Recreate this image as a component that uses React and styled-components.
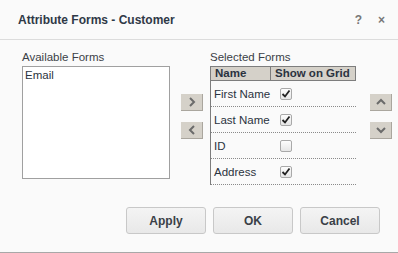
import React from "react";
import styled, { createGlobalStyle } from "styled-components";

const GlobalStyle = createGlobalStyle`
  html, body {
    margin: 0;
    padding: 0;
    background: #fafafa;
  }
  body {
    font-family: Tahoma, "DejaVu Sans", "Liberation Sans", sans-serif;
  }
`;

const selected = [
  { name: "First Name", grid: true },
  { name: "Last Name", grid: true },
  { name: "ID", grid: false },
  { name: "Address", grid: true },
];

const Chevron = ({ dir }) => {
  const paths = {
    right: "M3 1 L7 5 L3 9",
    left: "M7 1 L3 5 L7 9",
    up: "M1 7 L5 3 L9 7",
    down: "M1 3 L5 7 L9 3",
  };
  return (
    <svg width="10" height="10" viewBox="0 0 10 10">
      <path d={paths[dir]} fill="none" stroke="#6b6b6b" strokeWidth="2" />
    </svg>
  );
};

export default function App() {
  return (
    <>
      <GlobalStyle />
      <Dialog>
        <Header>
          <Title>Attribute Forms - Customer</Title>
          <HeaderTools>
            <ToolGlyph>?</ToolGlyph>
            <ToolGlyph>×</ToolGlyph>
          </HeaderTools>
        </Header>
        <Body>
          <Panel width={148}>
            <Label>Available Forms</Label>
            <ListBox>
              <ListItem>Email</ListItem>
            </ListBox>
          </Panel>
          <Shifters side="left">
            <ArrowButton><Chevron dir="right" /></ArrowButton>
            <ArrowButton><Chevron dir="left" /></ArrowButton>
          </Shifters>
          <Panel width={146}>
            <Label>Selected Forms</Label>
            <Grid>
              <HeadRow>
                <HeadCell width={60}>Name</HeadCell>
                <HeadCell last>Show on Grid</HeadCell>
              </HeadRow>
              {selected.map((row) => (
                <Row key={row.name}>
                  <NameCell>{row.name}</NameCell>
                  <CheckCell>
                    <Check>
                      {row.grid && (
                        <svg width="10" height="10" viewBox="0 0 10 10">
                          <path d="M1.5 5 L4 7.5 L8.5 1.5" fill="none" stroke="#222" strokeWidth="1.8" />
                        </svg>
                      )}
                    </Check>
                  </CheckCell>
                </Row>
              ))}
            </Grid>
          </Panel>
          <Shifters side="right">
            <ArrowButton><Chevron dir="up" /></ArrowButton>
            <ArrowButton><Chevron dir="down" /></ArrowButton>
          </Shifters>
        </Body>
        <Footer>
          <Button>Apply</Button>
          <Button>OK</Button>
          <Button>Cancel</Button>
        </Footer>
      </Dialog>
    </>
  );
}

const Dialog = styled.div`
  width: 398px;
  height: 253px;
  box-sizing: border-box;
  background: #fafafa;
  border-bottom: 1px solid #a8a8a8;
  display: flex;
  flex-direction: column;
`;

const Header = styled.div`
  height: 40px;
  box-sizing: border-box;
  border-bottom: 1px solid #dcdcdc;
  display: flex;
  align-items: center;
  padding: 0 12px 0 18px;
`;

const Title = styled.div`
  flex: 1;
  font-family: "Liberation Sans", Arial, sans-serif;
  font-weight: bold;
  font-size: 12px;
  color: #2f3947;
`;

const HeaderTools = styled.div`
  display: flex;
  gap: 14px;
`;

const ToolGlyph = styled.span`
  font-family: "Liberation Sans", Arial, sans-serif;
  font-weight: bold;
  font-size: 12px;
  color: #777;
  width: 9px;
  text-align: center;
`;

const Body = styled.div`
  display: flex;
  align-items: flex-start;
  box-sizing: border-box;
  padding: 10px 0 0 22px;
  height: 157px;
`;

const Panel = styled.div`
  width: ${(p) => p.width}px;
  display: flex;
  flex-direction: column;
`;

const Label = styled.div`
  font-family: "Liberation Sans", Arial, sans-serif;
  font-size: 11.5px;
  color: #3a3f47;
  height: 16px;
  line-height: 14px;
`;

const ListBox = styled.div`
  height: 113px;
  box-sizing: border-box;
  border: 1px solid #a0a0a0;
  background: #fff;
  padding: 1px 2px;
`;

const ListItem = styled.div`
  font-family: "Liberation Sans", Arial, sans-serif;
  font-size: 11.5px;
  color: #2b3340;
  line-height: 14px;
`;

const Shifters = styled.div`
  display: flex;
  flex-direction: column;
  gap: 11px;
  margin-top: 44px;
  margin-left: ${(p) => (p.side === "left" ? 11 : 14)}px;
  margin-right: ${(p) => (p.side === "left" ? 7 : 0)}px;
`;

const ArrowButton = styled.div`
  width: 22px;
  height: 17px;
  box-sizing: border-box;
  background: #d5d1c9;
  border-right: 1px solid #aaa69e;
  border-bottom: 1px solid #aaa69e;
  display: flex;
  align-items: center;
  justify-content: center;
`;

const Grid = styled.div`
  border-left: 1px solid #7d7d7d;
  display: flex;
  flex-direction: column;
`;

const HeadRow = styled.div`
  display: flex;
  height: 15px;
  box-sizing: border-box;
  background: #d5d1c9;
  border-top: 1px solid #7d7d7d;
  border-bottom: 1px solid #7d7d7d;
  border-right: 1px solid #7d7d7d;
`;

const HeadCell = styled.div`
  ${(p) => (p.width ? `width: ${p.width}px;` : "flex: 1;")}
  box-sizing: border-box;
  border-right: ${(p) => (p.last ? "none" : "1px solid #7d7d7d")};
  padding-left: 4px;
  font-family: "Liberation Sans", Arial, sans-serif;
  font-weight: bold;
  font-size: 11.5px;
  line-height: 13px;
  color: #2b3340;
`;

const Row = styled.div`
  display: flex;
  align-items: center;
  height: 26px;
  box-sizing: border-box;
  border-bottom: 1px dotted #8a8a8a;
`;

const NameCell = styled.div`
  width: 60px;
  padding-left: 3px;
  font-family: "Liberation Sans", Arial, sans-serif;
  font-size: 11.5px;
  color: #2b3340;
`;

const CheckCell = styled.div`
  flex: 1;
  padding-left: 6px;
  display: flex;
`;

const Check = styled.span`
  width: 12px;
  height: 12px;
  box-sizing: border-box;
  border: 1px solid #a9a9a9;
  border-radius: 2px;
  background: linear-gradient(#fdfdfd, #e6e6e6);
  display: flex;
  align-items: center;
  justify-content: center;
`;

const Footer = styled.div`
  display: flex;
  justify-content: flex-end;
  gap: 7px;
  padding: 0 18px 0 0;
  margin-top: 10px;
`;

const Button = styled.div`
  width: 80px;
  height: 27px;
  box-sizing: border-box;
  border: 1px solid #c8c8c8;
  border-radius: 3px;
  background: linear-gradient(#f4f4f4, #e8e8e8);
  display: flex;
  align-items: center;
  justify-content: center;
  font-family: "Liberation Sans", Arial, sans-serif;
  font-weight: bold;
  font-size: 12px;
  color: #3a3f47;
`;
